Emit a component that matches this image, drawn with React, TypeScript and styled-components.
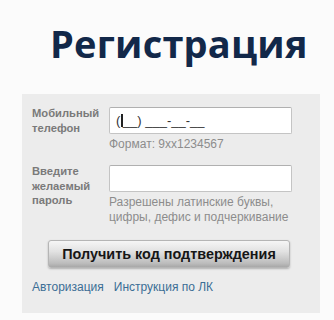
import React from 'react';
import styled, { createGlobalStyle } from 'styled-components';

const GlobalStyle = createGlobalStyle`
  html, body {
    margin: 0;
    padding: 0;
    background: #fbfbfb;
  }
  body {
    font-family: "Liberation Sans", Arial, sans-serif;
  }
`;

const Page = styled.div`
  width: 334px;
  height: 320px;
  overflow: hidden;
  padding-top: 19px;
  box-sizing: border-box;
`;

const Title = styled.h1`
  margin: 0 0 0 50px;
  font-family: "Open Sans", "Noto Sans", sans-serif;
  font-weight: 700;
  font-size: 38px;
  line-height: 48px;
  letter-spacing: 0.2px;
  color: #122849;
`;

const Panel = styled.div`
  margin: 27px 0 0 22px;
  width: 298px;
  height: 219px;
  box-sizing: border-box;
  background: #ececec;
  padding: 13px 0 0 10px;
`;

const FieldRow = styled.div<{ $gap?: number }>`
  display: grid;
  grid-template-columns: 77px 183px;
  margin-bottom: ${p => p.$gap ?? 0}px;
`;

const Label = styled.div`
  font-size: 11.2px;
  line-height: 14.5px;
  font-weight: 700;
  color: #7a7a7a;
  margin-top: -1px;
`;

const Input = styled.div`
  height: 27px;
  box-sizing: border-box;
  background: #fff;
  border: 1px solid #c4c4c4;
  border-top-color: #b0b0b0;
  border-radius: 2px;
  padding: 0 6px;
  display: flex;
  align-items: center;
  font-size: 13px;
  color: #333;
`;

const Caret = styled.span`
  display: inline-block;
  width: 1.5px;
  height: 13px;
  background: #222;
  margin: 0 0 0 1px;
  vertical-align: middle;
`;

const Hint = styled.div`
  margin-top: 3px;
  font-size: 12px;
  line-height: 15px;
  color: #8c8c8c;
`;

const ButtonWrap = styled.div`
  display: flex;
  padding-left: 16px;
  margin-top: 15px;
`;

const Button = styled.button`
  width: 242px;
  height: 28px;
  border: 1px solid #b5b5b5;
  border-radius: 3px;
  background: linear-gradient(#f6f6f6 0%, #e2e2e2 40%, #bdbdbd 85%, #a8a8a8 100%);
  box-shadow: 0 1px 2px rgba(0, 0, 0, 0.25);
  font-family: "Liberation Sans", Arial, sans-serif;
  font-weight: 700;
  font-size: 14.4px;
  color: #161616;
  padding: 0;
`;

const Links = styled.div`
  display: flex;
  gap: 10px;
  margin-top: 12px;
  font-size: 12px;
`;

const Link = styled.a`
  color: #3b6e95;
  text-decoration: none;
`;

export default function App() {
  return (
    <Page>
      <GlobalStyle />
      <Title>Регистрация</Title>
      <Panel>
        <FieldRow $gap={13}>
          <Label>Мобильный<br />телефон</Label>
          <div>
            <Input>(<Caret />__) ___-__-__</Input>
            <Hint>Формат: 9xx1234567</Hint>
          </div>
        </FieldRow>
        <FieldRow>
          <Label>Введите<br />желаемый<br />пароль</Label>
          <div>
            <Input />
            <Hint>Разрешены латинские буквы,<br />цифры, дефис и подчеркивание</Hint>
          </div>
        </FieldRow>
        <ButtonWrap>
          <Button>Получить код подтверждения</Button>
        </ButtonWrap>
        <Links>
          <Link href="#">Авторизация</Link>
          <Link href="#">Инструкция по ЛК</Link>
        </Links>
      </Panel>
    </Page>
  );
}
